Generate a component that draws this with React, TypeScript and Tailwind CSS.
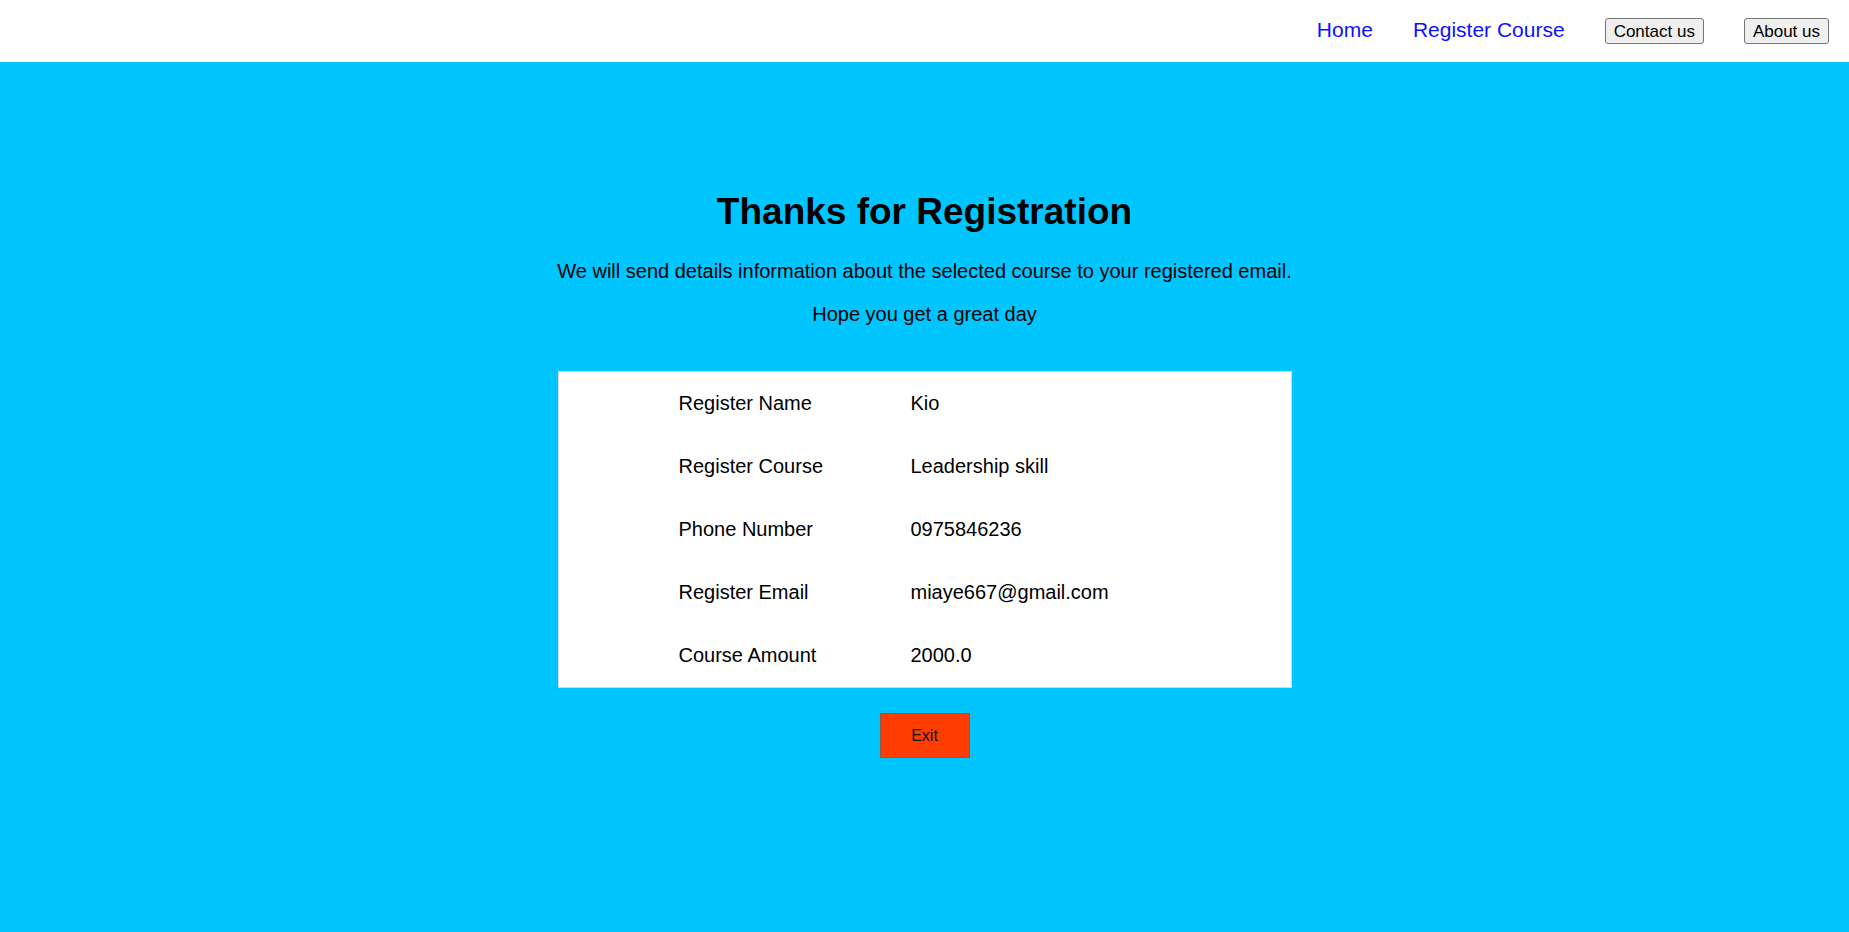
const navLinks = [
  { label: "Home", href: "#" },
  { label: "Register Course", href: "#" },
];

const navButtons = ["Contact us", "About us"];

const details = [
  { label: "Register Name", value: "Kio" },
  { label: "Register Course", value: "Leadership skill" },
  { label: "Phone Number", value: "0975846236" },
  { label: "Register Email", value: "miaye667@gmail.com" },
  { label: "Course Amount", value: "2000.0" },
];

export default function App() {
  return (
    <div className="min-h-[932px] flex flex-col font-['Liberation_Sans',Arial,sans-serif] text-black">
      {/* Top nav */}
      <header className="h-[62px] bg-white flex items-center justify-end gap-[40px] pr-[20px]">
        {navLinks.map((l) => (
          <a key={l.label} href={l.href} className="mb-[3px] text-[21px] leading-none text-[#1010ff]">
            {l.label}
          </a>
        ))}
        {navButtons.map((b) => (
          <button
            key={b}
            className="h-[26px] px-[8px] text-[17px] leading-none bg-[#efefef] border border-[#767676] rounded-[3px] text-black"
          >
            {b}
          </button>
        ))}
      </header>

      {/* Confirmation */}
      <main className="flex-1 bg-[#00c5ff] flex flex-col items-center pt-[128px]">
        <h1 className="text-[37px] leading-[44px] font-bold">Thanks for Registration</h1>
        <p className="mt-[25px] text-[20px] leading-[24px]">
          We will send details information about the selected course to your registered email.
        </p>
        <p className="mt-[19px] text-[20px] leading-[24px]">Hope you get a great day</p>

        <div className="mt-[45px] w-[734px] bg-white border border-[#d8d8d8]">
          {details.map((d) => (
            <div key={d.label} className="h-[63px] flex items-center pl-[120px] pb-[2px] text-[20px] leading-[24px]">
              <span className="w-[232px]">{d.label}</span>
              <span>{d.value}</span>
            </div>
          ))}
        </div>

        <button className="mt-[25px] w-[90px] h-[45px] bg-[#ff3d00] border border-[#8a5a4a] text-[16px] text-[#111]">
          Exit
        </button>
      </main>
    </div>
  );
}
